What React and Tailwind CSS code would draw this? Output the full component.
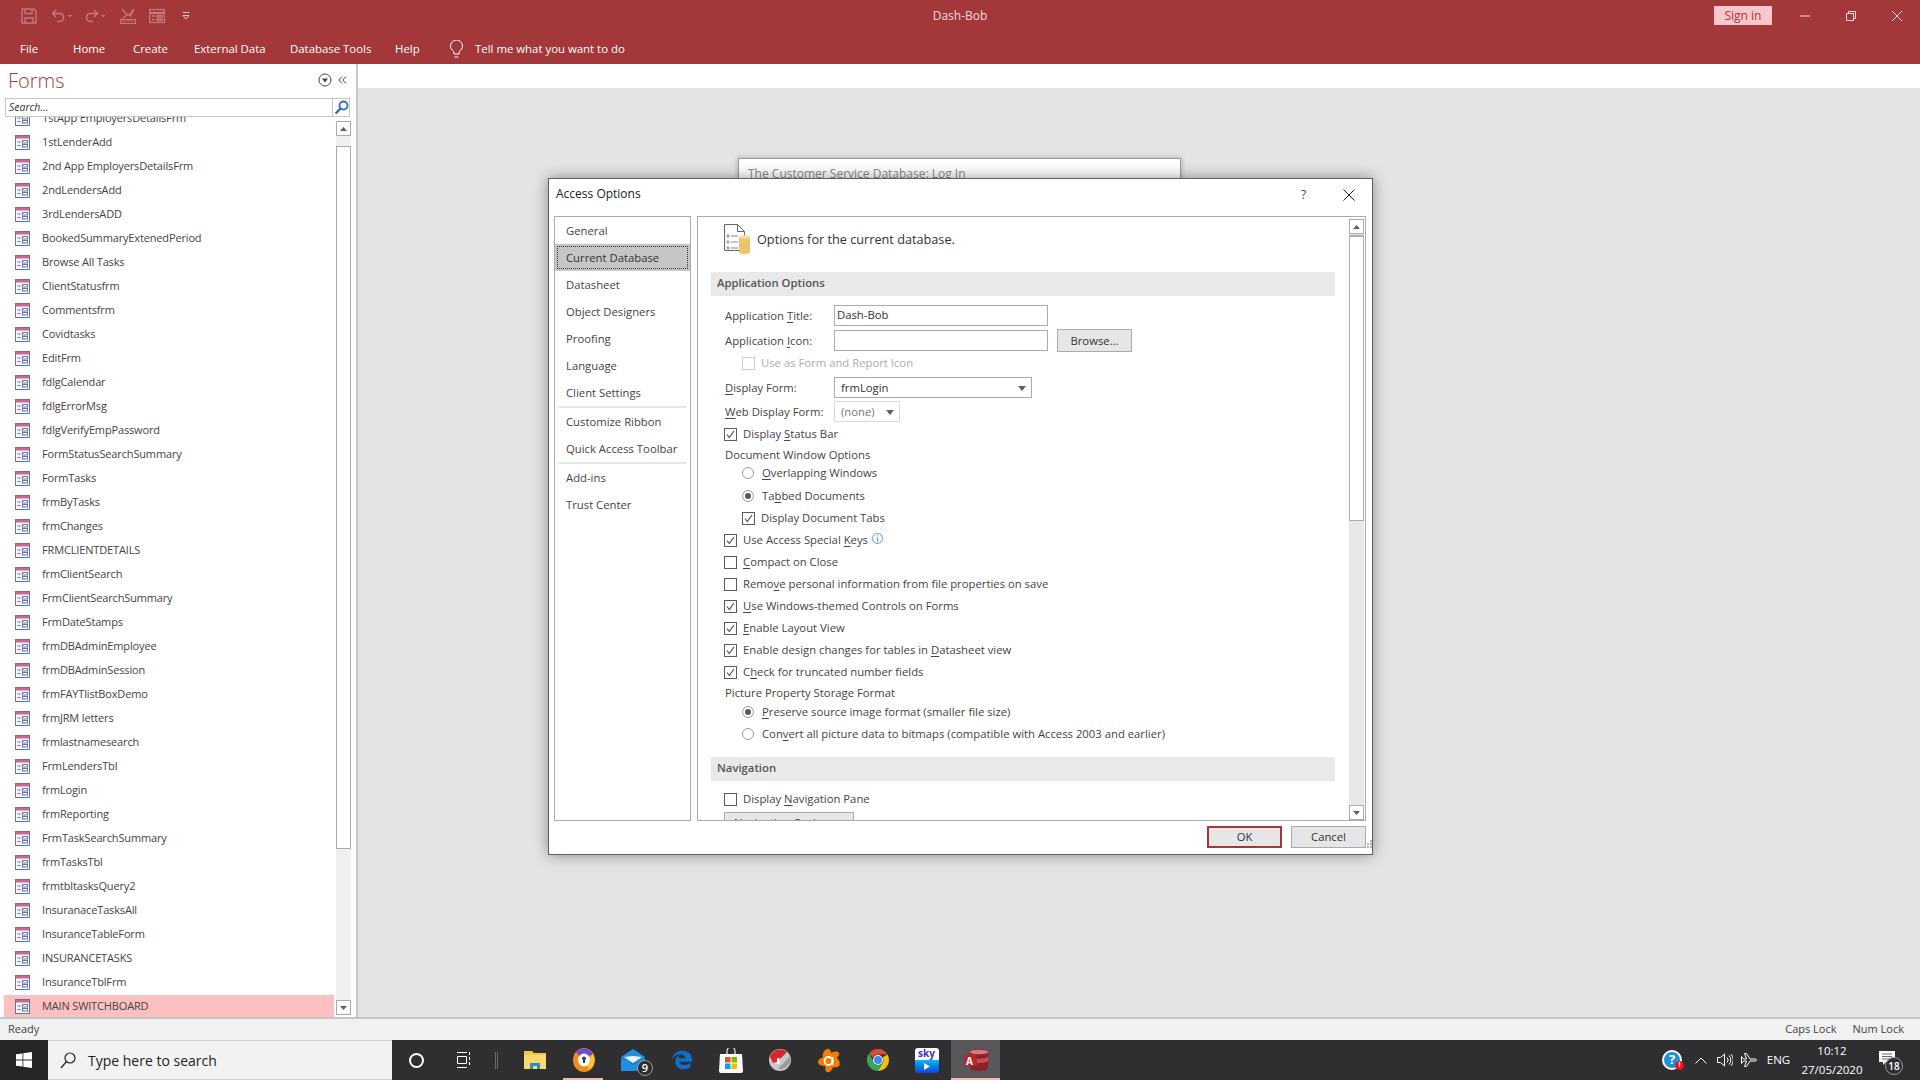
import React from "react";

const forms = ["1stApp EmployersDetailsFrm","1stLenderAdd","2nd App EmployersDetailsFrm","2ndLendersAdd","3rdLendersADD","BookedSummaryExtenedPeriod","Browse All Tasks","ClientStatusfrm","Commentsfrm","Covidtasks","EditFrm","fdlgCalendar","fdlgErrorMsg","fdlgVerifyEmpPassword","FormStatusSearchSummary","FormTasks","frmByTasks","frmChanges","FRMCLIENTDETAILS","frmClientSearch","FrmClientSearchSummary","FrmDateStamps","frmDBAdminEmployee","frmDBAdminSession","frmFAYTlistBoxDemo","frmJRM letters","frmlastnamesearch","FrmLendersTbl","frmLogin","frmReporting","FrmTaskSearchSummary","frmTasksTbl","frmtbltasksQuery2","InsuranaceTasksAll","InsuranceTableForm","INSURANCETASKS","InsuranceTblFrm","MAIN SWITCHBOARD"];

function FormIcon() {
  return (
    <svg width="15" height="15" viewBox="0 0 15 15" className="shrink-0">
      <rect x="0.500" y="0.500" width="14" height="14" fill="#f5f7fc" stroke="#6373a3" />
      <rect x="1" y="1" width="13" height="2.500" fill="#d4668a" />
      <path d="M2.500 7h3M2.500 10.500h3" stroke="#6373a3" />
      <rect x="7.500" y="5.500" width="5" height="2.500" fill="#fff" stroke="#6373a3" />
      <rect x="7.500" y="9.500" width="5" height="2.500" fill="#fff" stroke="#6373a3" />
    </svg>
  );
}

function QatIcons() {
  const c = "#c4787a";
  return (
    <div className="flex items-center h-8 pl-[21px]">
      <svg width="16" height="16" viewBox="0 0 16 16" fill="none" stroke={c} strokeWidth="1.400">
        <path d="M1 1h12l2 2v12H1z" /><path d="M4 1.500v4h7v-4M4 15v-5h8v5" />
      </svg>
      <svg width="24" height="16" viewBox="0 0 24 16" fill="none" stroke={c} strokeWidth="1.600" className="ml-[14px]">
        <path d="M5 2L1.500 5.500 5 9M2 5.500h6.500a4 4 0 0 1 0 8H6" /><path d="M17 7l2 2 2-2" fill={c} strokeWidth="0.600" />
      </svg>
      <svg width="24" height="16" viewBox="0 0 24 16" fill="none" stroke={c} strokeWidth="1.600" className="ml-[8px]">
        <path d="M11 2l3.500 3.500L11 9M14 5.500H7.500a4 4 0 0 0 0 8H10" /><path d="M18 7l2 2 2-2" fill={c} strokeWidth="0.600" />
      </svg>
      <svg width="16" height="16" viewBox="0 0 16 16" fill="none" stroke={c} strokeWidth="1.300" className="ml-[13px]">
        <path d="M2 1l5 6 3-1L14 1l-3.500 7L9 7M3 10l5-4" /><rect x="0.500" y="11.500" width="15" height="4" /><path d="M3 12v2M6 12v2M9 12v2M12 12v2" strokeWidth="1" />
      </svg>
      <svg width="16" height="16" viewBox="0 0 16 16" fill="none" stroke={c} strokeWidth="1.300" className="ml-[13px]">
        <rect x="0.700" y="1.500" width="14.600" height="13" /><path d="M1 5h14" strokeWidth="2.400" /><path d="M3 8h3M3 11.500h3" /><rect x="8" y="7.500" width="5" height="1.500" /><rect x="8" y="11" width="5" height="1.500" />
      </svg>
      <svg width="8" height="8" viewBox="0 0 8 8" className="ml-[17px]">
        <path d="M0.500 0.500h7" stroke="#e8c9c9" fill="none" /><path d="M1 3.500h6L4 7z" fill="none" stroke="#e8c9c9" />
      </svg>
    </div>
  );
}

function U({ children }) {
  return <span className="underline underline-offset-[2px]">{children}</span>;
}

function Check({ on, disabled }) {
  return (
    <span className={`flex items-center justify-center w-[13px] h-[13px] shrink-0 border bg-white ${disabled ? "border-[#cfcfcf]" : "border-[#5a5a5a]"}`}>
      {on && (
        <svg width="11" height="11" viewBox="0 0 11 11" fill="none" stroke="#555" strokeWidth="1.200">
          <path d="M2 5.500l2.300 3L9 2" />
        </svg>
      )}
    </span>
  );
}

function Radio({ on }) {
  return (
    <span className="flex items-center justify-center w-[12px] h-[12px] shrink-0 rounded-full border border-[#9a9a9a] bg-white">
      {on && <span className="block w-[6px] h-[6px] rounded-full bg-[#555]" />}
    </span>
  );
}

function CheckRow({ on, nested, cls = "", children }) {
  return (
    <div className={`flex items-center gap-[6px] h-[22px] ${nested ? "pl-[44px]" : "pl-[26px]"} ${cls}`}>
      <Check on={on} />
      <span>{children}</span>
    </div>
  );
}

function RadioRow({ on, cls = "", children }) {
  return (
    <div className={`flex items-center gap-[8px] h-[22px] pl-[44px] ${cls}`}>
      <Radio on={on} />
      <span>{children}</span>
    </div>
  );
}

function Arrow({ c = "#606060" }) {
  return (
    <svg width="8" height="5" viewBox="0 0 8 5"><path d="M0 0h8L4 5z" fill={c} /></svg>
  );
}

function ScrollBtn({ up, cls = "" }) {
  return (
    <div className={`flex items-center justify-center w-[15px] h-[15px] shrink-0 border border-[#ababab] bg-white ${cls}`}>
      <svg width="7" height="4" viewBox="0 0 7 4"><path d={up ? "M0 4h7L3.500 0z" : "M0 0h7L3.500 4z"} fill="#606060" /></svg>
    </div>
  );
}

function NavPane() {
  return (
    <div className="flex flex-col w-[358px] shrink-0 bg-white border-r-2 border-[#c6c6c6] pr-[4px] overflow-hidden">
      <div className="flex items-center h-[34px] pl-[8px]">
        <span className="text-[20px] font-light text-[#a4373a] leading-none">Forms</span>
        <svg width="14" height="14" viewBox="0 0 14 14" className="ml-auto mr-[6px] -mt-[2px]" fill="none">
          <circle cx="7" cy="7" r="6" stroke="#444" />
          <path d="M4 5.500h6L7 9.500z" fill="#444" />
        </svg>
        <svg width="9" height="8" viewBox="0 0 9 8" className="mr-[5px] -mt-[2px]" fill="none" stroke="#444">
          <path d="M4 0.500L0.800 4 4 7.500M8 0.500L4.800 4 8 7.500" />
        </svg>
      </div>
      <div className="flex items-center ml-[5px] h-[19px] w-[345px] shrink-0 border border-[#c6c6c6] bg-white relative z-10">
        <span className="flex-1 pl-[3px] text-[10.5px] italic text-[#333]">Search...</span>
        <span className="flex items-center justify-center w-[17px] h-full border-l border-[#c6c6c6]">
          <svg width="15" height="15" viewBox="0 0 15 15" fill="none" stroke="#2a6fb5" strokeWidth="1.800">
            <circle cx="9.500" cy="5.500" r="4" /><path d="M6.500 8.500L1.500 13.500" strokeWidth="2.400" />
          </svg>
        </span>
      </div>
      <div className="flex flex-1 min-h-0">
        <div className="w-[336px] shrink-0 overflow-hidden">
          <div className="-mt-[11px]">
            {forms.map((f) => {
              const active = f === "MAIN SWITCHBOARD";
              return (
                <div key={f} className="h-[24px] py-px pl-[4px] pr-[2px]">
                  <div className={`flex items-center gap-[12px] h-[22px] pl-[11px] text-[11px] tracking-[-0.15px] text-[#444] ${active ? "bg-[#fdc0c0]" : ""}`}>
                    <FormIcon />
                    <span>{f}</span>
                  </div>
                </div>
              );
            })}
          </div>
        </div>
        <div className="flex flex-col w-[15px] shrink-0 mt-[4px] mb-[2px] bg-[#f0f0f0]">
          <ScrollBtn up />
          <div className="h-[703px] mt-[10px] border border-[#ababab] bg-white" />
          <div className="flex-1" />
          <ScrollBtn />
        </div>
      </div>
    </div>
  );
}

function SectionHeader({ children }) {
  return (
    <div className="flex items-center shrink-0 ml-[13px] w-[624px] h-[24px] pl-[6px] pb-[2px] bg-[#e9e9e9] font-semibold text-[#555]">{children}</div>
  );
}

function Field({ label, cls = "", children }) {
  return (
    <div className={`flex items-center h-[21px] ${cls}`}>
      <span className="w-[136px] pl-[27px] pt-px shrink-0">{label}</span>
      {children}
    </div>
  );
}

function OptionsContent() {
  return (
    <div className="flex-1 min-w-0 overflow-hidden text-[11.3px] text-[#444]">
      <div className="flex items-center h-[44px] pl-[26px] gap-[6px]">
        <svg width="27" height="30" viewBox="0 0 27 30" fill="none">
          <path d="M0.500 0.500h13l7 7v19h-20z" fill="#fff" stroke="#666" />
          <path d="M13.500 0.500v7h7" stroke="#666" />
          <circle cx="4" cy="12" r="1.200" stroke="#888" /><circle cx="4" cy="18" r="1.200" stroke="#888" /><circle cx="4" cy="24" r="1.200" stroke="#888" />
          <path d="M7 12h7M7 18h7M7 24h7" stroke="#888" />
          <path d="M15 13c0-2 11-2 11 0v15c0 2.500-11 2.500-11 0z" fill="#f1c26e" />
          <ellipse cx="20.500" cy="13" rx="5.500" ry="1.800" fill="#f7dca4" />
        </svg>
        <span className="text-[12.7px] text-[#333] mt-[1px]">Options for the current database.</span>
      </div>
      <div className="mt-[11px]"><SectionHeader>Application Options</SectionHeader></div>
      <Field cls="mt-[9px]" label={<>Application <U>T</U>itle:</>}>
        <div className="flex items-center w-[214px] h-[21px] border border-[#ababab] pl-[2px] pb-[1px] text-[#333]">Dash-Bob</div>
      </Field>
      <Field cls="mt-[4px]" label={<>Application <U>I</U>con:</>}>
        <div className="w-[214px] h-[21px] border border-[#ababab]" />
        <div className="flex items-center justify-center ml-[9px] w-[75px] h-[23px] pt-px border border-[#ababab] bg-[#e6e6e6] text-[#333]">Browse...</div>
      </Field>
      <div className="flex items-center gap-[6px] h-[22px] pl-[44px] mt-[1px] text-[#ababab]">
        <Check disabled />
        <span>Use as Form and Report Icon</span>
      </div>
      <Field cls="mt-[3px]" label={<><U>D</U>isplay Form:</>}>
        <div className="flex items-center justify-between w-[198px] h-[21px] border border-[#ababab] pl-[6px] pr-[5px] pt-px text-[#333]">
          <span>frmLogin</span><Arrow />
        </div>
      </Field>
      <Field cls="mt-[3px]" label={<><U>W</U>eb Display Form:</>}>
        <div className="flex items-center justify-between w-[66px] h-[21px] border border-[#d9d9d9] pl-[6px] pr-[5px] pt-px text-[#777]">
          <span>(none)</span><Arrow />
        </div>
      </Field>
      <CheckRow on cls="mt-[1px]">Display <U>S</U>tatus Bar</CheckRow>
      <div className="flex items-center h-[22px] pl-[27px] -mt-px">Document Window Options</div>
      <RadioRow cls="-mt-[4px]"><U>O</U>verlapping Windows</RadioRow>
      <RadioRow on cls="mt-[1px]">Ta<U>b</U>bed Documents</RadioRow>
      <CheckRow on nested>Display Document Tabs</CheckRow>
      <div className="flex items-center">
        <CheckRow on>Use Access Special <U>K</U>eys</CheckRow>
        <svg width="11" height="11" viewBox="0 0 11 11" fill="none" className="ml-[4px] -mt-[3px]">
          <circle cx="5.500" cy="5.500" r="5" stroke="#5b9bd5" />
          <path d="M5.500 4.500v4M5.500 2.500v1" stroke="#5b9bd5" />
        </svg>
      </div>
      <CheckRow><U>C</U>ompact on Close</CheckRow>
      <CheckRow>Remo<U>v</U>e personal information from file properties on save</CheckRow>
      <CheckRow on><U>U</U>se Windows-themed Controls on Forms</CheckRow>
      <CheckRow on><U>E</U>nable Layout View</CheckRow>
      <CheckRow on>Enable design changes for tables in <U>D</U>atasheet view</CheckRow>
      <CheckRow on>C<U>h</U>eck for truncated number fields</CheckRow>
      <div className="flex items-center h-[22px] pl-[27px] -mt-px">Picture Property Storage Format</div>
      <RadioRow on cls="-mt-[3px]"><U>P</U>reserve source image format (smaller file size)</RadioRow>
      <RadioRow>Con<U>v</U>ert all picture data to bitmaps (compatible with Access 2003 and earlier)</RadioRow>
      <div className="mt-[12px]"><SectionHeader>Navigation</SectionHeader></div>
      <CheckRow cls="mt-[7px]">Display <U>N</U>avigation Pane</CheckRow>
      <div className="flex justify-center ml-[26px] mt-[2px] w-[130px] h-[23px] pt-[2px] border border-[#ababab] bg-[#e6e6e6] text-[#333]">Navigation Options...</div>
    </div>
  );
}

function Dialog() {
  const left = [["General"],["Current Database",1],["Datasheet"],["Object Designers"],["Proofing"],["Language"],["Client Settings"]];
  return (
    <div className="absolute left-[548px] top-[178px] w-[825px] h-[677px] flex flex-col border border-[#5f5f5f] bg-white shadow-[0_0_14px_rgba(0,0,0,0.4)]">
      <div className="flex items-center h-[37px] shrink-0 pl-[7px] text-[12px] text-[#222]">
        <span className="-mt-[7px]">Access Options</span>
        <span className="ml-auto -mt-[6px] w-[10px] text-[#444]">?</span>
        <svg width="12" height="12" viewBox="0 0 12 12" stroke="#222" className="ml-[32px] mr-[17px] -mt-[6px]"><path d="M0.500 0.500l11 11M11.500 0.500l-11 11" /></svg>
      </div>
      <div className="flex gap-[6px] pl-[5px] h-[605px] shrink-0">
        <div className="w-[137px] h-full border border-[#ababab] text-[11.3px] text-[#444]">
          {left.map(([t, sel]) => (
            sel ? (
              <div key={t} className="h-[27px] bg-[#c6c6c6] p-[2px]">
                <div className="flex items-center h-full pl-[8px] pt-px border border-dotted border-[#333] text-[#333]">{t}</div>
              </div>
            ) : <div key={t} className="flex items-center h-[27px] pl-[11px] pt-px">{t}</div>
          ))}
          <div className="h-[2px] mx-[3px] bg-[#e6e6e6]" />
          <div className="flex items-center h-[27px] pl-[11px] pt-px">Customize Ribbon</div>
          <div className="flex items-center h-[27px] pl-[11px] pt-px">Quick Access Toolbar</div>
          <div className="h-[2px] mx-[3px] bg-[#e6e6e6]" />
          <div className="flex items-center h-[27px] pl-[11px] pt-px">Add-ins</div>
          <div className="flex items-center h-[27px] pl-[11px] pt-px">Trust Center</div>
        </div>
        <div className="flex w-[669px] h-full border border-[#ababab]">
          <OptionsContent />
          <div className="flex flex-col w-[15px] shrink-0 mr-px mt-[2px] bg-[#e8e8e8]">
            <ScrollBtn up />
            <div className="h-[286px] mt-px border-x border-b border-t-2 border-[#ababab] bg-white" />
            <div className="flex-1" />
            <ScrollBtn />
          </div>
        </div>
      </div>
      <div className="flex justify-end gap-[9px] pt-[5px] pr-[6px] text-[11.3px] text-[#333] relative">
        <div className="flex items-center justify-center w-[75px] h-[22px] border-2 border-[#a4373a] bg-[#e6e6e6]">OK</div>
        <div className="flex items-center justify-center w-[75px] h-[22px] border border-[#ababab] bg-[#e6e6e6]">Cancel</div>
        <svg width="8" height="8" viewBox="0 0 8 8" className="absolute right-0 bottom-0" fill="#b5b5b5">
          <rect x="6" y="0" width="2" height="2" /><rect x="3" y="3" width="2" height="2" /><rect x="6" y="3" width="2" height="2" /><rect x="0" y="6" width="2" height="2" /><rect x="3" y="6" width="2" height="2" /><rect x="6" y="6" width="2" height="2" />
        </svg>
      </div>
    </div>
  );
}

function Cell({ w = "w-[49px]", cls = "", children }) {
  return <div className={`flex items-center justify-center h-full shrink-0 relative ${w} ${cls}`}>{children}</div>;
}

function Taskbar() {
  return (
    <div className="flex items-center h-[40px] shrink-0 bg-[#2f2f31] text-white">
      <Cell w="w-[48px]" cls="bg-[#262626]">
        <svg width="16" height="16" viewBox="0 0 16 16" fill="#fff"><path d="M0 2.300l6.500-.9v6.200H0zM7.300 1.300L16 0v7.600H7.300zM0 8.400h6.500v6.200L0 13.700zM7.300 8.400H16V16l-8.700-1.200z" /></svg>
      </Cell>
      <div className="flex items-center w-[344px] h-full bg-[#f2f2f2] border-y border-[#cfcfcf] pl-[12px] text-[#222] shrink-0">
        <svg width="16" height="17" viewBox="0 0 16 17" fill="none" stroke="#222" strokeWidth="1.200"><circle cx="10" cy="6" r="5" /><path d="M6.500 9.500L1 16" /></svg>
        <span className="ml-[12px] text-[14px]">Type here to search</span>
      </div>
      <Cell w="w-[48px]"><span className="block w-[15px] h-[15px] rounded-full border-2 border-white" /></Cell>
      <Cell w="w-[48px]">
        <svg width="16" height="16" viewBox="0 0 16 16" fill="none" stroke="#fff"><path d="M1 0.500h10M1 15.500h10M1.500 4.500h9v7h-9zM13.500 0v3M13.500 5v3M13.500 10v3" /></svg>
      </Cell>
      <Cell w="w-[22px]"><span className="block w-[3px] h-[17px] -ml-[6px] border-x border-[#6a6a6a]" /></Cell>
      <Cell>
        <svg width="22" height="20" viewBox="0 0 22 20"><path d="M0 1h8l2 2h12v15H0z" fill="#f2c94c" /><path d="M0 5h22v14H0z" fill="#fbd96a" /><path d="M6 19v-6h10v6h-3v-3H9v3z" fill="#2f88d0" /></svg>
      </Cell>
      <Cell>
        <svg width="22" height="24" viewBox="0 0 22 24">
          <ellipse cx="11" cy="12" rx="11" ry="12" fill="#f28b1e" />
          <path d="M3 4a11 12 0 0 1 17 2L14 9H7z" fill="#6b4dd8" />
          <path d="M20 6a11 12 0 0 1-4 16l-3-8z" fill="#f5c935" />
          <ellipse cx="11" cy="12" rx="6" ry="6.500" fill="#fff" />
          <circle cx="11" cy="10.500" r="2" fill="#3a3f55" /><rect x="10" y="11" width="2" height="4" fill="#3a3f55" />
        </svg>
        <span className="absolute bottom-0 left-[4px] right-[5px] h-[2px] bg-[#f7b5b5]" />
      </Cell>
      <Cell>
        <svg width="24" height="22" viewBox="0 0 24 22"><path d="M0 8L12 0l12 8v14H0z" fill="#1f8fe0" /><path d="M0 8l12 8 12-8v1L12 15 0 9z" fill="#0d6ab5" /><path d="M3 8l9 6 9-6-9-1z" fill="#f2f2f2" /></svg>
        <span className="absolute left-[29px] top-[20px] flex items-center justify-center w-[16px] h-[16px] rounded-full border border-[#999] bg-[#2f2f31] text-[11px] font-semibold">9</span>
      </Cell>
      <Cell>
        <svg width="20" height="22" viewBox="0 0 24 24"><path d="M12 1C5 1 .5 6 0 12c2-5 6-7 10-7 4 0 6 3 6 5H8c0-2 .5-3 1.500-4C5.500 7 4 10 4 14c0 6 5 9 10 9 3 0 6-1 8-2v-6c-2 2-5 3-7 3-3 0-6-1.500-6.500-4H24v-3C24 5 19 1 12 1z" fill="#0c6fc8" /></svg>
      </Cell>
      <Cell>
        <svg width="24" height="25" viewBox="0 0 24 25">
          <path d="M8 6V3a4 4 0 0 1 8 0v3" fill="none" stroke="#eee" strokeWidth="1.200" />
          <path d="M1 6h22l1 17a2 2 0 0 1-2 2H2a2 2 0 0 1-2-2z" fill="#fff" />
          <rect x="6" y="9" width="5.500" height="5.500" fill="#e8502a" /><rect x="12.500" y="9" width="5.500" height="5.500" fill="#7fb900" />
          <rect x="6" y="15.500" width="5.500" height="5.500" fill="#00a3ee" /><rect x="12.500" y="15.500" width="5.500" height="5.500" fill="#fdb900" />
        </svg>
      </Cell>
      <Cell>
        <svg width="22" height="22" viewBox="0 0 22 22">
          <circle cx="11" cy="11" r="11" fill="#c9c9c9" />
          <path d="M1 8a10.500 10.500 0 0 1 17-5L9 12 4 14z" fill="#d8262c" />
          <path d="M9 20L21 7a10.500 10.500 0 0 1-12 13z" fill="#9a9a9a" />
          <path d="M8 9h2.500v6H8z" fill="#fff" />
        </svg>
      </Cell>
      <Cell>
        <svg width="24" height="25" viewBox="0 0 24 25">
          <path d="M10 1c3-1 4 2 4 4 3-2 7-2 8 0s-2 4-2 5c2 2 4 6 2 8s-5 1-6 1c-1 3-3 6-6 5s-1-4-2-6c-3 0-7-1-7-4s4-4 5-5c-1-3 1-7 4-8z" fill="#f57c00" />
          <circle cx="11.500" cy="13" r="4" fill="none" stroke="#fff" strokeWidth="1.800" /><path d="M15.500 9v8" stroke="#fff" strokeWidth="1.800" />
        </svg>
      </Cell>
      <Cell>
        <svg width="22" height="22" viewBox="0 0 22 22">
          <path d="M11 0a11 11 0 0 1 9.500 5.500H11a5.500 5.500 0 0 0-5 3.200L2.300 4.300A11 11 0 0 1 11 0z" fill="#dd4b39" />
          <path d="M20.500 5.500A11 11 0 0 1 11 22l4.700-8.200a5.500 5.500 0 0 0 0-5.600z" fill="#f4c20d" />
          <path d="M11 22A11 11 0 0 1 2.300 4.300L6.800 13.500A5.500 5.500 0 0 0 11 16.500l4.700-2.700z" fill="#3aa757" />
          <circle cx="11" cy="11" r="5" fill="#fff" /><circle cx="11" cy="11" r="4" fill="#4285f4" />
        </svg>
      </Cell>
      <Cell>
        <div className="flex flex-col w-[24px] h-[25px] rounded-[3px] overflow-hidden">
          <div className="flex items-start justify-center h-[12px] bg-white text-[#3a2fd0] text-[10px] font-bold leading-[11px]">sky</div>
          <div className="flex items-center justify-center flex-1 bg-gradient-to-b from-[#18b4f0] to-[#1a3ee0]">
            <svg width="6" height="7" viewBox="0 0 6 7"><path d="M0 0l6 3.500L0 7z" fill="#fff" /></svg>
          </div>
        </div>
      </Cell>
      <Cell cls="bg-[#58585a]">
        <svg width="24" height="24" viewBox="0 0 24 24">
          <path d="M6 4c0-4 18-4 18 0v16c0 4-18 4-18 0z" fill="#8f1f27" />
          <path d="M6 4c0 3 18 3 18 0s-18-3-18 0z" fill="#d27c84" />
          <path d="M6 8.500c3 3 15 3 18 0V13c-3 3-15 3-18 0z" fill="#c84a54" />
          <rect x="0" y="6" width="13" height="12" fill="#b2282f" />
        </svg>
        <span className="absolute left-[15px] top-[14px] text-[10px] font-bold text-white">A</span>
        <span className="absolute bottom-0 inset-x-0 h-[2px] bg-[#f7b5b5]" />
      </Cell>
      <div className="flex-1" />
      <div className="flex items-center h-full">
        <Cell w="w-[24px]">
          <span className="flex items-center justify-center w-[20px] h-[20px] rounded-full bg-[#1e90d8] border-2 border-white text-[13px] font-bold">?</span>
          <span className="absolute left-[15px] top-[21px] flex items-center justify-center w-[9px] h-[9px] rounded-full bg-[#e81123] text-[7px] font-bold">!</span>
        </Cell>
        <Cell w="w-[34px]"><svg width="12" height="7" viewBox="0 0 12 7" fill="none" stroke="#fff"><path d="M0.500 6.500L6 1l5.500 5.500" /></svg></Cell>
        <Cell w="w-[14px]"><svg width="16" height="14" viewBox="0 0 16 14" fill="none" stroke="#fff" className="shrink-0"><path d="M0.500 4.500h3l4-3.500v12l-4-3.500h-3zM10 4.500a3.500 3.500 0 0 1 0 5M12 2.500a6.500 6.500 0 0 1 0 9M14 1a9 9 0 0 1 0 12" /></svg></Cell>
        <Cell w="w-[34px]"><svg width="16" height="14" viewBox="0 0 16 14" fill="none" stroke="#fff"><path d="M0.500 3.500l2 2.500h3L3.500 0.500h2L9 6h5c2 0 2 2 0 2H9l-3.500 5.500h-2L5.500 8h-3l-2 2.500z" /></svg></Cell>
        <Cell w="w-[25px]"><span className="text-[11.5px]">ENG</span></Cell>
        <Cell w="w-[82px]">
          <div className="flex flex-col items-center text-[11.5px] leading-[19px]"><span>10:12</span><span>27/05/2020</span></div>
        </Cell>
        <Cell w="w-[28px]">
          <svg width="16" height="14" viewBox="0 0 16 14" fill="#fff" className="-mt-[4px]"><path d="M0 0h16v11H7l-3 3v-3H0z" /><path d="M3 3h10M3 5.500h10M3 8h10" stroke="#444" strokeWidth="0.800" /></svg>
          <span className="absolute left-[12px] top-[17px] flex items-center justify-center w-[18px] h-[18px] rounded-full border border-[#999] bg-[#2f2f31] text-[10px] font-semibold">18</span>
        </Cell>
        <div className="w-[19px]" />
      </div>
    </div>
  );
}

export default function App() {
  const tabs = [["File","w-[73px] pl-[20px]"],["Home","w-[60px]"],["Create","w-[61px]"],["External Data","w-[96px]"],["Database Tools","w-[105px]"],["Help","w-[55px]"]];
  return (
    <div className="relative flex flex-col w-[1920px] h-[1080px] overflow-hidden bg-[#e4e4e4] font-['Open_Sans','Noto_Sans',sans-serif]">
      <div className="shrink-0 h-[64px] bg-[#a4373a] text-white">
        <div className="flex items-center justify-between h-[32px]">
          <div className="w-[500px]"><QatIcons /></div>
          <span className="text-[12px] text-[#f3dcdc]">Dash-Bob</span>
          <div className="flex items-center justify-end w-[500px] h-full">
            <div className="flex items-center justify-center w-[58px] h-[19px] -mt-[1px] bg-[#fac7ca] text-[#a4373a] text-[12px]">Sign in</div>
            <svg width="10" height="2" viewBox="0 0 10 2" className="ml-[28px]" stroke="#f2dede"><path d="M0 1h10" /></svg>
            <svg width="10" height="10" viewBox="0 0 10 10" className="ml-[36px]" fill="none" stroke="#f2dede"><path d="M0.500 2.500h7v7h-7zM2.500 2V0.500h7v7H8" /></svg>
            <svg width="10" height="10" viewBox="0 0 10 10" className="ml-[36px] mr-[18px]" stroke="#f2dede"><path d="M0 0l10 10M10 0L0 10" /></svg>
          </div>
        </div>
        <div className="flex items-center h-[32px] pt-[2px] text-[11.4px] whitespace-nowrap">
          {tabs.map(([t, c]) => <span key={t} className={`block shrink-0 ${c}`}>{t}</span>)}
          <svg width="13" height="18" viewBox="0 0 13 18" fill="none" stroke="#fff" className="shrink-0"><path d="M4.500 17h4M4 14h5L9.500 11c2-1 3-3 3-5a6 6 0 0 0-12 0c0 2 1 4 3 5z" /></svg>
          <span className="ml-[12px]">Tell me what you want to do</span>
        </div>
      </div>
      <div className="flex flex-1 min-h-0">
        <NavPane />
        <div className="flex-1"><div className="h-[24px] bg-white" /></div>
      </div>
      <div className="flex items-center justify-between shrink-0 h-[23px] border-t-2 border-[#c6c6c6] bg-[#f1f1f1] text-[11px] text-[#444]">
        <span className="pl-[8px]">Ready</span>
        <div className="flex pr-[16px] gap-[16px]"><span>Caps Lock</span><span>Num Lock</span></div>
      </div>
      <Taskbar />
      <div className="absolute left-[738px] top-[158px] w-[443px] h-[60px] border border-[#9a9a9a] bg-white pl-[9px] pt-[6px] text-[12px] text-[#8a8a8a] shadow-[0_0_6px_rgba(0,0,0,0.25)]">The Customer Service Database: Log In</div>
      <Dialog />
    </div>
  );
}
